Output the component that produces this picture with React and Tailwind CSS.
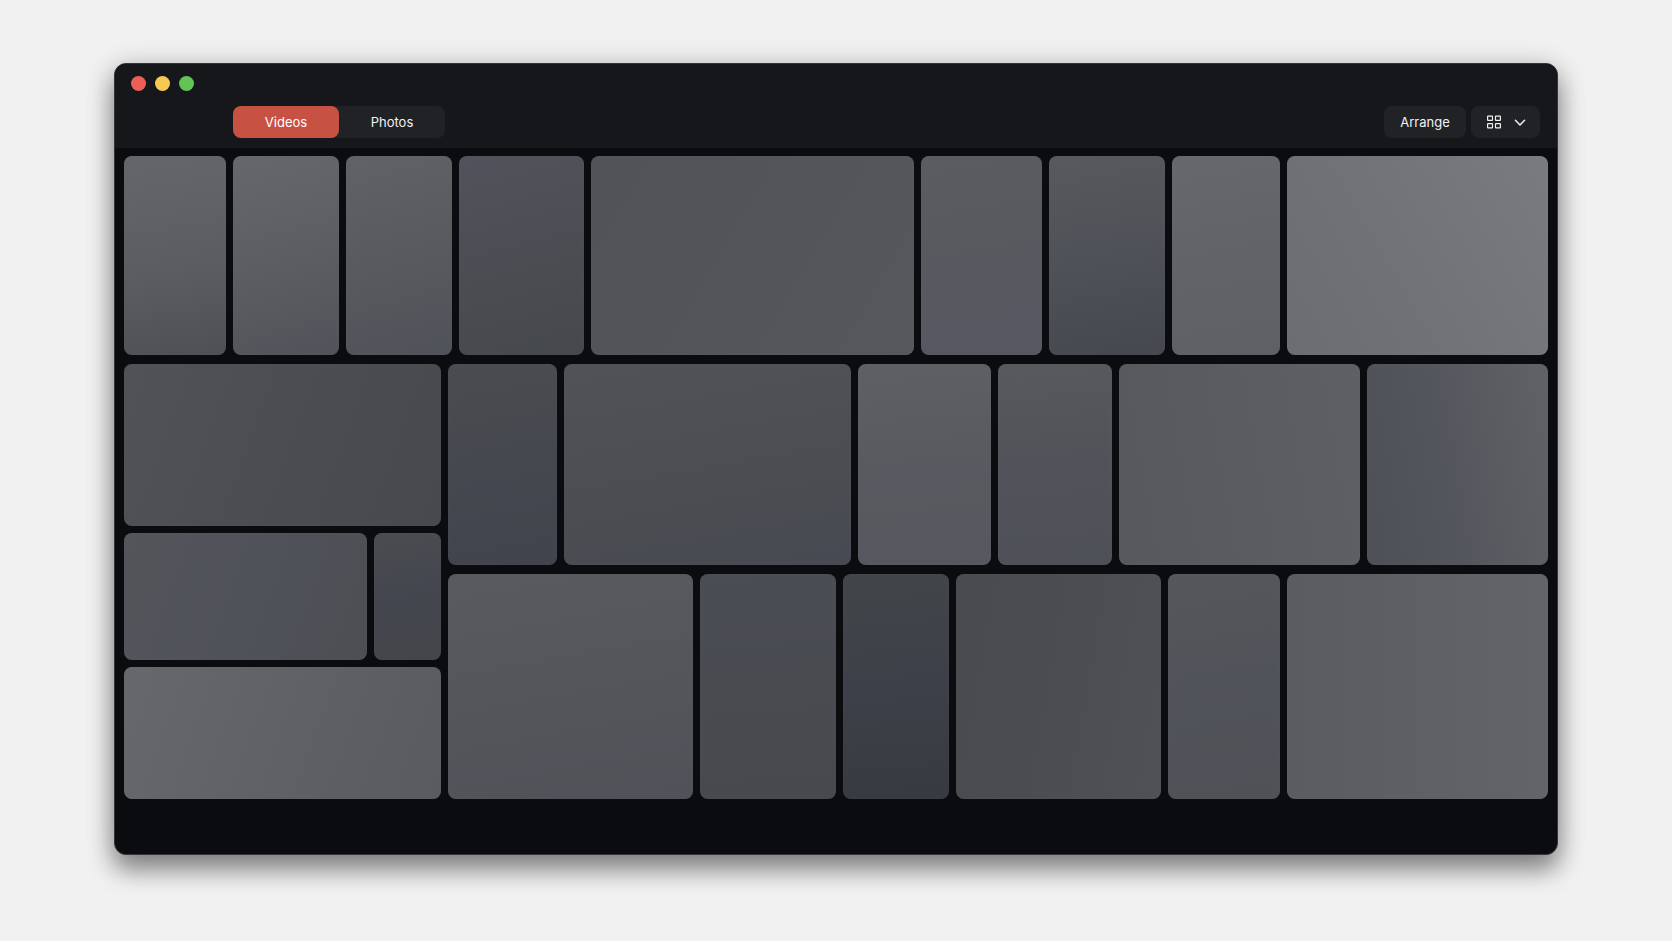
import clsx from 'clsx';

// Each tile: share of the row's width, then its shading.
const topRow = [
  'grow-[102] bg-linear-[170deg,#65666a,#5c5d61_55%,#4f5055]',
  'grow-[106] bg-linear-[165deg,#66676a,#5d5e62_50%,#52535a]',
  'grow-[106] bg-linear-[165deg,#616265,#595a5e_50%,#50525a]',
  'grow-[125] bg-linear-[165deg,#51525b,#4b4d53_55%,#45484c]',
  'grow-[323] bg-linear-[120deg,#525356,#545558_50%,#57585b]',
  'grow-[121] bg-linear-[170deg,#5b5c5f,#58595f_50%,#565761]',
  'grow-[116] bg-linear-[170deg,#58595c,#505259_45%,#45484e]',
  'grow-[108] bg-linear-[170deg,#67686b,#626366_50%,#5f6066]',
  'grow-[261] bg-linear-[60deg,#6c6d72,#727376_50%,#7a7b7e]',
];

const middleRow = [
  'grow-[109] bg-linear-[170deg,#4a4c4f,#464850_45%,#41444c]',
  'grow-[287] bg-linear-[170deg,#505256,#4c4e52_50%,#484a53]',
  'grow-[133] bg-linear-[175deg,#5f6063,#595a60_50%,#57585f]',
  'grow-[114] bg-linear-[175deg,#58595c,#52535a_50%,#4e5058]',
  'grow-[241] bg-linear-[80deg,#57585b,#5b5c5f_50%,#5f6063]',
  'grow-[181] bg-linear-[80deg,#4e5057,#54565d_45%,#616266]',
];

const bottomRow = [
  'grow-[245] bg-linear-[170deg,#595a5d,#55565b_50%,#515259]',
  'grow-[136] bg-linear-[175deg,#4b4d55,#494b51_50%,#47494d]',
  'grow-[106] bg-linear-[175deg,#424549,#3d4048_50%,#373a40]',
  'grow-[205] bg-linear-[100deg,#4a4b4e,#4c4d50_50%,#505154]',
  'grow-[112] bg-linear-[170deg,#56575b,#51535a_50%,#4f5157]',
  'grow-[261] bg-linear-[90deg,#5b5c5f,#5f6065_50%,#636467]',
];

function Tile({ className }) {
  return (
    <div
      className={clsx(
        'basis-0 min-w-0 rounded-lg shadow-[inset_0_0_1px_rgba(255,255,255,0.12)]',
        className
      )}
    />
  );
}

function Row({ tiles, className }) {
  return (
    <div className={clsx('flex gap-[7px]', className)}>
      {tiles.map((tile) => (
        <Tile key={tile} className={tile} />
      ))}
    </div>
  );
}

function GridIcon() {
  return (
    <svg className="w-[14px] h-[14px]" viewBox="0 0 14 14" fill="none" stroke="currentColor" strokeWidth="1.15" aria-hidden="true">
      <rect x="0.6" y="1.1" width="4.9" height="4.2" rx="0.4" />
      <rect x="8.5" y="1.1" width="4.9" height="4.2" rx="0.4" />
      <rect x="0.6" y="8.6" width="4.9" height="4.2" rx="0.4" />
      <rect x="8.5" y="8.6" width="4.9" height="4.2" rx="0.4" />
    </svg>
  );
}

function ChevronIcon() {
  return (
    <svg className="w-3 h-3" viewBox="0 0 12 12" fill="none" stroke="currentColor" strokeWidth="1.5" strokeLinecap="round" strokeLinejoin="round" aria-hidden="true">
      <path d="M1.4 4.2 6 9 10.6 4.2" />
    </svg>
  );
}

function TitleBar() {
  return (
    <header className="h-[84px] bg-[#15171a] flex flex-col">
      {/* Window buttons */}
      <div className="flex gap-[9px] pl-4 pt-3 pb-[15px]">
        <button type="button" aria-label="Close" className="w-[15px] h-[15px] rounded-full bg-[#ea6059]" />
        <button type="button" aria-label="Minimize" className="w-[15px] h-[15px] rounded-full bg-[#f6c951]" />
        <button type="button" aria-label="Zoom" className="w-[15px] h-[15px] rounded-full bg-[#62c454]" />
      </div>

      {/* Toolbar */}
      <div className="flex items-center justify-between pl-[118px] pr-[17px] text-[13px] text-[#f1f1f2]">
        <div className="flex h-8 rounded-lg bg-[#202226]">
          <button type="button" aria-pressed="true" className="w-[106px] pt-0.5 rounded-lg bg-[#c75243] text-white">
            Videos
          </button>
          <button type="button" aria-pressed="false" className="w-[106px] pt-0.5 rounded-lg">
            Photos
          </button>
        </div>
        <div className="flex gap-[5px]">
          <button type="button" className="w-[82px] h-8 pt-0.5 rounded-lg bg-[#202226]">
            Arrange
          </button>
          <button
            type="button"
            aria-label="View options"
            className="w-[69px] h-8 rounded-lg bg-[#202226] flex items-center pl-4 gap-[13px]"
          >
            <GridIcon />
            <ChevronIcon />
          </button>
        </div>
      </div>
    </header>
  );
}

export default function App() {
  return (
    <div className="min-h-screen bg-[#f1f1f1] px-[114px] pt-[63px] pb-[86px] font-['Inter',sans-serif]">
      <div className="rounded-xl overflow-hidden bg-[#0a0c0f] border border-[#34363a] shadow-[0_16px_24px_rgba(0,0,0,0.36),0_4px_28px_rgba(0,0,0,0.24)]">
        <TitleBar />

        <main className="flex flex-col gap-[9px] px-[9px] pt-2 pb-[55px]">
          <Row tiles={topRow} className="h-[199px]" />

          <div className="flex gap-[7px]">
            <div className="flex flex-col gap-[7px] basis-0 grow-[317]">
              <Tile className="grow-[162] bg-linear-[110deg,#515255,#4c4d51_50%,#48494c]" />
              <div className="flex gap-[7px] basis-0 grow-[127]">
                <Tile className="grow-[243] bg-linear-[110deg,#54555a,#50525a_50%,#4c4e53]" />
                <Tile className="grow-[67] bg-linear-[170deg,#4a4c50,#43464e_50%,#43454a]" />
              </div>
              <Tile className="grow-[132] bg-linear-[110deg,#67686b,#606164_50%,#5a5b5f]" />
            </div>

            <div className="flex flex-col gap-[9px] basis-0 grow-[1100]">
              <Row tiles={middleRow} className="h-[201px]" />
              <Row tiles={bottomRow} className="h-[225px]" />
            </div>
          </div>
        </main>
      </div>
    </div>
  );
}
